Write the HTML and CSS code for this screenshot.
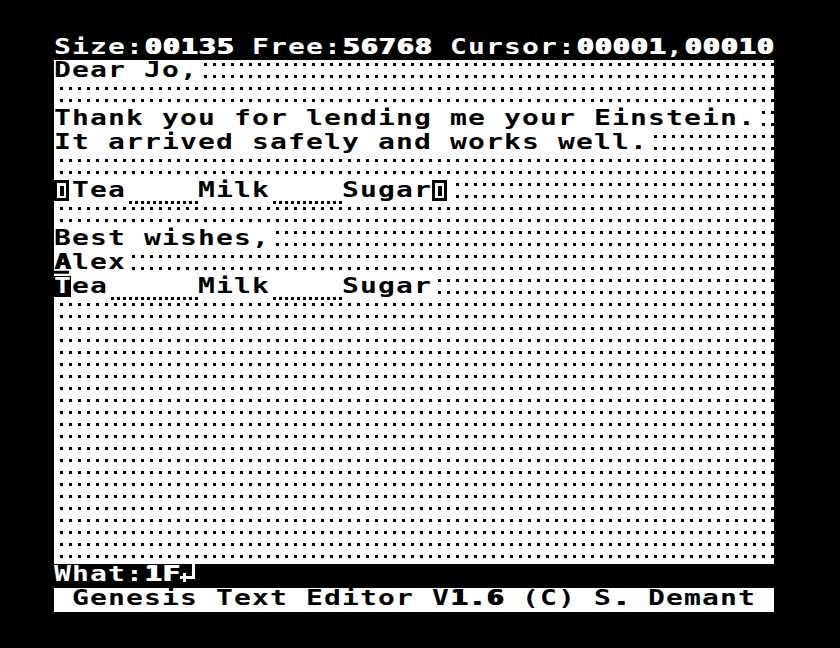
FILE: index.html
```html
<!DOCTYPE html>
<html>
<head>
<meta charset="utf-8">
<title>Genesis Text Editor</title>
<link rel="stylesheet" href="styles.css">
</head>
<body>
<div class="screen">
  <div class="row bar top"><span class="t">Size:<b>00135</b> Free:<b>56768</b> Cursor:<b>00001</b>,<b>00010</b></span></div>
  <div class="doc">
    <div class="row"><span class="t">Dear Jo,</span></div>
    <div class="row"></div>
    <div class="row"><span class="t">Thank you for lending me your Einstein.</span></div>
    <div class="row"><span class="t">It arrived safely and works well.</span></div>
    <div class="row"></div>
    <div class="row"><span class="mark"></span><span class="t">Tea</span><span class="fill c4"></span><span class="t">Milk</span><span class="fill c4"></span><span class="t">Sugar</span><span class="mark"></span></div>
    <div class="row"></div>
    <div class="row"><span class="t">Best wishes,</span></div>
    <div class="row"><span class="t"><span class="blk">A</span>lex</span></div>
    <div class="row"><span class="t"><span class="cur">T</span>ea</span><span class="fill c5"></span><span class="t">Milk</span><span class="fill c4"></span><span class="t">Sugar</span></div>
    <div class="row"></div>
    <div class="row"></div>
    <div class="row"></div>
    <div class="row"></div>
    <div class="row"></div>
    <div class="row"></div>
    <div class="row"></div>
    <div class="row"></div>
    <div class="row"></div>
    <div class="row"></div>
    <div class="row"></div>
  </div>
  <div class="row bar"><span class="t">What:<b>1F</b></span><svg class="ret" width="18" height="24" viewBox="0 0 18 24"><rect x="12" y="0" width="3" height="15" fill="#fff"/><rect x="3" y="12" width="12" height="3" fill="#fff"/><rect x="3" y="9" width="3" height="9" fill="#fff"/><rect x="0" y="12" width="3" height="3" fill="#fff"/></svg></div>
  <div class="row foot"><span class="t"> Genesis Text Editor V<b>1.6</b> (C) S<b>.</b> Demant</span></div>
</div>
</body>
</html>
```
FILE: styles.css
```css
html, body {
  margin: 0;
  padding: 0;
  background: #000;
}
body {
  width: 840px;
  height: 648px;
  overflow: hidden;
}
.screen {
  width: 720px;
  margin: 36px 0 0 54px;
  font-family: "DejaVu Sans Mono", "Liberation Mono", monospace;
  font-weight: bold;
  font-size: 28px;
}
.row {
  display: flex;
  align-items: flex-start;
  height: 24px;
}
/* text cells: laid out 32px tall, squashed to 24px so glyphs get the wide, square look */
.t {
  white-space: pre;
  letter-spacing: 1.143px;
  line-height: 28.6px;
  height: 32px;
  flex: none;
  background: #fff;
  color: #000;
  transform: scaleY(0.75);
  transform-origin: 0 0;
}
b {
  font-weight: bold;
  text-shadow: 1px 0 0 currentColor, 2px 0 0 currentColor;
}
.bar {
  background: #000;
}
.bar .t {
  background: #000;
  color: #fff;
}
.top .t {
  padding-top: 1px;
  height: 31px;
}
.foot {
  background: #fff;
}
.doc {
  background-color: #fff;
  background-image: conic-gradient(at 3px 3px, transparent 75%, #000 0);
  background-size: 9px 12px;
  background-position: 6px 3px;
}
.fill {
  flex: none;
  height: 24px;
  background-color: #fff;
  background-image: conic-gradient(at 3px 3px, transparent 75%, #000 0);
  background-size: 6px 24px;
  background-position: 3px 21px;
}
.c4 { width: 72px; }
.c5 { width: 90px; }
.mark {
  flex: none;
  width: 18px;
  height: 24px;
  background: #fff;
  display: flex;
  align-items: flex-start;
}
.mark::before {
  content: "";
  width: 9px;
  height: 15px;
  border: 3px solid #000;
  background: linear-gradient(#000, #000) center / 4px 10px no-repeat;
}
.cur, .blk {
  display: inline-block;
  vertical-align: top;
  width: 18px;
  height: 32px;
  line-height: 28.6px;
}
.cur {
  color: #fff;
  background: linear-gradient(#000, #000) 0 0 / 17px 28px no-repeat, #fff;
}
.blk {
  text-shadow: 1px 0 0 currentColor;
  background: linear-gradient(#000, #000) 0 25px / 15px 4px no-repeat;
}
.ret {
  display: block;
  flex: none;
}
```
